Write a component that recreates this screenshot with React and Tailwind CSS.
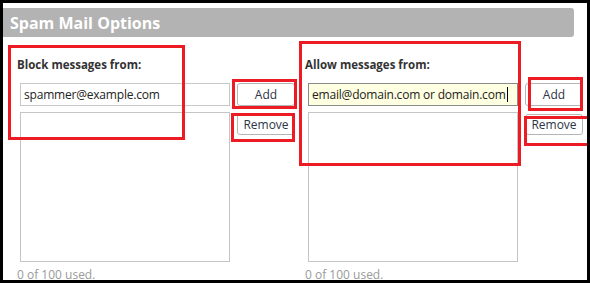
import React from "react";

const font = { fontFamily: '"Open Sans", "Noto Sans", sans-serif' };

function ListColumn({ label, value, highlight }) {
  return (
    <div className="flex flex-col">
      <div className="h-[35px] pt-[10px] text-[11.5px] font-bold leading-[14px] text-[#333]">
        {label}
      </div>
      <div className="flex gap-[7px] pl-[3px]">
        <div className="flex w-[210px] flex-col gap-[6px]">
          <div
            className={
              highlight
                ? "flex h-[23px] items-center overflow-hidden whitespace-nowrap border border-[#8a8a8a] bg-[#ffffe1] pl-[3px] text-[12px] tracking-[-0.2px] text-[#222]"
                : "flex h-[23px] items-center overflow-hidden whitespace-nowrap border border-[#c8c8c8] bg-white pl-[3px] text-[12px] tracking-[-0.2px] text-[#222]"
            }
          >
            <span>{value}</span>
            {highlight && <span className="ml-[1px] h-[15px] w-px shrink-0 bg-black" />}
          </div>
          <div className="h-[150px] border border-[#c4c4c4] bg-white" />
        </div>
        <div className="flex w-[58px] flex-col gap-[8px]">
          <button className="h-[23px] rounded-[3px] border border-[#b5b5b5] bg-white text-[12px] text-[#2c3445]">
            Add
          </button>
          <button className="h-[21px] rounded-[3px] border border-[#b5b5b5] bg-white text-[12px] leading-[19px] text-[#2c3445]">
            Remove
          </button>
        </div>
      </div>
      <div className="mt-[5px] text-[12px] leading-[16px] text-[#9a9a9a]">0 of 100 used.</div>
    </div>
  );
}

export default function App() {
  return (
    <div className="relative h-[283px] w-[590px] overflow-hidden border-[3px] border-black bg-white" style={font}>
      <div className="mt-[5px] mr-[13px] flex h-[29px] items-center rounded-r-[3px] bg-[#b3b3b3] pl-[7px] text-[16px] font-bold text-white">
        Spam Mail Options
      </div>
      <div className="grid grid-cols-[288px_288px] pl-[14px] pt-[11px]">
        <ListColumn label="Block messages from:" value="spammer@example.com" />
        <ListColumn label="Allow messages from:" value="email@domain.com or domain.com" highlight />
      </div>

      {/* red annotation boxes */}
      <div className="absolute left-[5px] top-[42px] h-[95px] w-[177px] border-[3px] border-[#ed1c24]" />
      <div className="absolute left-[229px] top-[76px] h-[30px] w-[65px] border-[3px] border-[#ed1c24]" />
      <div className="absolute left-[228px] top-[110px] h-[29px] w-[64px] border-[3px] border-[#ed1c24]" />
      <div className="absolute left-[296px] top-[38px] h-[125px] w-[222px] border-[3px] border-[#ed1c24]" />
      <div className="absolute left-[525px] top-[74px] h-[34px] w-[55px] border-[3px] border-[#ed1c24]" />
      <div className="absolute left-[521px] top-[113px] h-[30px] w-[66px] border-[3px] border-[#ed1c24]" />
    </div>
  );
}
